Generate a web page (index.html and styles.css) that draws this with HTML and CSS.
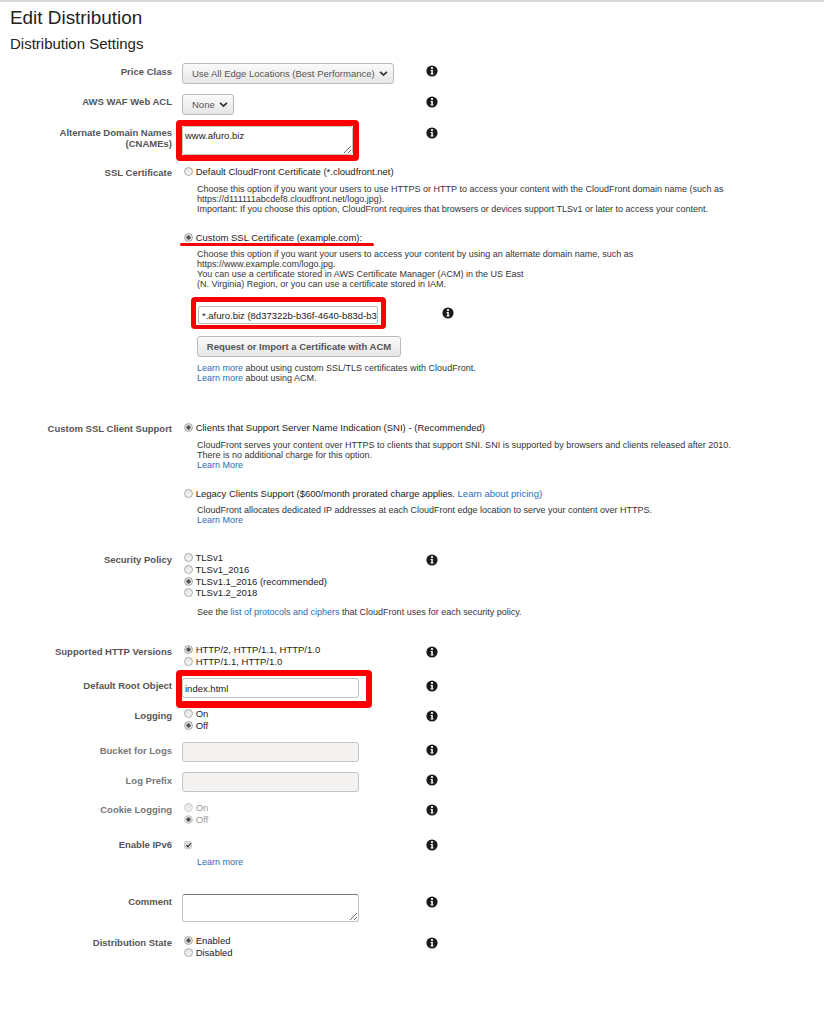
FILE: index.html
```html
<!DOCTYPE html>
<html lang="en">
<head>
    <meta charset="UTF-8">
    <meta name="viewport" content="width=device-width, initial-scale=1.0">
    <title>Edit Distribution</title>
    <link rel="stylesheet" href="styles.css">
</head>
<body>
    <svg class="icon-defs" width="0" height="0">
        <symbol id="info" viewBox="0 0 12 12">
            <circle cx="6" cy="6" r="5.6" fill="#1a1a1a"/>
            <circle cx="6" cy="3.1" r="1.15" fill="#fff"/>
            <path d="M4.6 5h2.2v3.4h.7v1H4.5v-1h.8V6h-.7z" fill="#fff"/>
        </symbol>
        <symbol id="chevron" viewBox="0 0 10 7">
            <path d="M1.2 1.6 5 5.2l3.8-3.6" fill="none" stroke="#333" stroke-width="2"/>
        </symbol>
    </svg>

    <h1>Edit Distribution</h1>
    <h2>Distribution Settings</h2>

    <form class="settings">
        <div class="row price-row">
            <label class="field-label">Price Class</label>
            <div class="control">
                <button type="button" class="dropdown">Use All Edge Locations (Best Performance) <svg class="chevron"><use href="#chevron"/></svg></button>
            </div>
            <svg class="info"><use href="#info"/></svg>
        </div>

        <div class="row waf-row">
            <label class="field-label">AWS WAF Web ACL</label>
            <div class="control">
                <button type="button" class="dropdown">None <svg class="chevron"><use href="#chevron"/></svg></button>
            </div>
            <svg class="info"><use href="#info"/></svg>
        </div>

        <div class="row cname-row">
            <label class="field-label">Alternate Domain Names<br>(CNAMEs)</label>
            <div class="control">
                <div class="highlight highlight-cname">
                    <textarea class="text-area cname-input">www.afuro.biz</textarea>
                </div>
            </div>
            <svg class="info"><use href="#info"/></svg>
        </div>

        <div class="row ssl-row">
            <label class="field-label">SSL Certificate</label>
            <div class="wide">
                <label class="option"><input type="radio" name="ssl"> Default CloudFront Certificate (*.cloudfront.net)</label>
                <p class="note first-note">Choose this option if you want your users to use HTTPS or HTTP to access your content with the CloudFront domain name (such as<br>
                https://d111111abcdef8.cloudfront.net/logo.jpg).<br>
                Important: If you choose this option, CloudFront requires that browsers or devices support TLSv1 or later to access your content.</p>

                <label class="option custom-ssl"><input type="radio" name="ssl" checked> Custom SSL Certificate (example.com):</label>
                <div class="underline"></div>
                <p class="note custom-note">Choose this option if you want your users to access your content by using an alternate domain name, such as<br>
                https://www.example.com/logo.jpg.<br>
                You can use a certificate stored in AWS Certificate Manager (ACM) in the US East<br>
                (N. Virginia) Region, or you can use a certificate stored in IAM.</p>

                <div class="cert-row">
                    <div class="highlight highlight-cert">
                        <div class="cert-select">*.afuro.biz (8d37322b-b36f-4640-b83d-b3</div>
                    </div>
                    <svg class="info"><use href="#info"/></svg>
                </div>

                <button type="button" class="dropdown acm-button">Request or Import a Certificate with ACM</button>
                <p class="note learn-note"><a href="#">Learn more</a> about using custom SSL/TLS certificates with CloudFront.<br>
                <a href="#">Learn more</a> about using ACM.</p>
            </div>
        </div>

        <div class="row client-row">
            <label class="field-label">Custom SSL Client Support</label>
            <div class="wide">
                <label class="option"><input type="radio" name="sni" checked> Clients that Support Server Name Indication (SNI) - (Recommended)</label>
                <p class="note first-note">CloudFront serves your content over HTTPS to clients that support SNI. SNI is supported by browsers and clients released after 2010.<br>
                There is no additional charge for this option.<br>
                <a href="#">Learn More</a></p>

                <label class="option legacy"><input type="radio" name="sni"> Legacy Clients Support ($600/month prorated charge applies.&nbsp;<a href="#">Learn about pricing)</a></label>
                <p class="note legacy-note">CloudFront allocates dedicated IP addresses at each CloudFront edge location to serve your content over HTTPS.<br>
                <a href="#">Learn More</a></p>
            </div>
        </div>

        <div class="row policy-row">
            <label class="field-label">Security Policy</label>
            <div class="control">
                <label class="option"><input type="radio" name="tls"> TLSv1</label>
                <label class="option"><input type="radio" name="tls"> TLSv1_2016</label>
                <label class="option"><input type="radio" name="tls" checked> TLSv1.1_2016 (recommended)</label>
                <label class="option"><input type="radio" name="tls"> TLSv1.2_2018</label>
            </div>
            <svg class="info"><use href="#info"/></svg>
            <p class="note policy-note">See the <a href="#">list of protocols and ciphers</a> that CloudFront uses for each security policy.</p>
        </div>

        <div class="row http-row">
            <label class="field-label">Supported HTTP Versions</label>
            <div class="control">
                <label class="option"><input type="radio" name="http" checked> HTTP/2, HTTP/1.1, HTTP/1.0</label>
                <label class="option"><input type="radio" name="http"> HTTP/1.1, HTTP/1.0</label>
            </div>
            <svg class="info"><use href="#info"/></svg>
        </div>

        <div class="row root-row">
            <label class="field-label">Default Root Object</label>
            <div class="control">
                <div class="highlight highlight-root">
                    <input type="text" class="text-input" value="index.html">
                </div>
            </div>
            <svg class="info"><use href="#info"/></svg>
        </div>

        <div class="row logging-row">
            <label class="field-label">Logging</label>
            <div class="control">
                <label class="option"><input type="radio" name="log"> On</label>
                <label class="option"><input type="radio" name="log" checked> Off</label>
            </div>
            <svg class="info"><use href="#info"/></svg>
        </div>

        <div class="row bucket-row">
            <label class="field-label muted">Bucket for Logs</label>
            <div class="control"><input type="text" class="text-input" disabled></div>
            <svg class="info"><use href="#info"/></svg>
        </div>

        <div class="row prefix-row">
            <label class="field-label muted">Log Prefix</label>
            <div class="control"><input type="text" class="text-input" disabled></div>
            <svg class="info"><use href="#info"/></svg>
        </div>

        <div class="row cookie-row">
            <label class="field-label muted">Cookie Logging</label>
            <div class="control">
                <label class="option disabled"><input type="radio" name="cookie" disabled> On</label>
                <label class="option disabled"><input type="radio" name="cookie" checked disabled> Off</label>
            </div>
            <svg class="info"><use href="#info"/></svg>
        </div>

        <div class="row ipv6-row">
            <label class="field-label">Enable IPv6</label>
            <div class="control">
                <label class="option"><input type="checkbox" checked></label>
                <p class="note ipv6-note"><a href="#">Learn more</a></p>
            </div>
            <svg class="info"><use href="#info"/></svg>
        </div>

        <div class="row comment-row">
            <label class="field-label">Comment</label>
            <div class="control"><textarea class="text-area comment-input"></textarea></div>
            <svg class="info"><use href="#info"/></svg>
        </div>

        <div class="row state-row">
            <label class="field-label">Distribution State</label>
            <div class="control">
                <label class="option"><input type="radio" name="state" checked> Enabled</label>
                <label class="option"><input type="radio" name="state"> Disabled</label>
            </div>
            <svg class="info"><use href="#info"/></svg>
        </div>
    </form>
</body>
</html>
```

FILE: styles.css
```css
body {
    margin: 0;
    height: 1024px;
    overflow: hidden;
    box-sizing: border-box;
    border-top: 2px solid #d8d8d8;
    background: #fff;
    color: #222;
    font-family: "Liberation Sans", Arial, sans-serif;
    font-size: 9.5px;
}

.icon-defs {
    display: block;
}

h1 {
    margin: 6px 0 0 10px;
    font-size: 18.9px;
    line-height: 20px;
    font-weight: normal;
}

h2 {
    margin: 7px 0 0 10px;
    font-size: 15px;
    line-height: 18px;
    font-weight: normal;
}

a {
    color: #2b6cb8;
    text-decoration: none;
}

.row {
    display: grid;
    grid-template-columns: 172px 234px 12px 1fr;
    column-gap: 10px;
    align-items: start;
}

.field-label {
    text-align: right;
    font-weight: bold;
    color: #555;
    line-height: 11px;
    padding-top: 2px;
}

.field-label.muted {
    color: #777;
}

.wide {
    grid-column: 2 / -1;
}

.control {
    min-width: 0;
}

.info {
    display: block;
    width: 12px;
    height: 12px;
    margin-top: 2px;
}

/* row spacing */
.price-row { margin-top: 10px; }
.price-row .field-label { padding-top: 3px; }
.waf-row { margin-top: 10px; }
.cname-row { margin-top: 5px; }
.cname-row .info { margin-top: 7px; }
.cname-row .field-label { padding-top: 6.5px; }
.ssl-row { margin-top: 4px; }
.client-row { margin-top: 38px; }
.policy-row { margin-top: 27px; }
.http-row { margin-top: 27px; }
.root-row { margin-top: 3px; }
.root-row .field-label { padding-top: 10px; }
.root-row .info { margin-top: 10px; }
.logging-row { margin-top: 0; }
.bucket-row { margin-top: 10px; }
.bucket-row .field-label { padding-top: 3px; }
.prefix-row { margin-top: 10px; }
.prefix-row .field-label { padding-top: 3px; }
.cookie-row { margin-top: 10px; }
.ipv6-row { margin-top: 14px; }
.ipv6-row .field-label { padding-top: 0; }
.ipv6-row .info { margin-top: 0; }
.comment-row { margin-top: 27px; }
.state-row { margin-top: 13px; }

.dropdown {
    display: inline-flex;
    vertical-align: top;
    align-items: center;
    gap: 4px;
    height: 21px;
    padding: 0 5px 0 9px;
    border: 1px solid #bbb;
    border-radius: 3px;
    background: linear-gradient(#fafafa, #e6e6e6);
    color: #555;
    font-family: inherit;
    font-size: 9.5px;
    white-space: nowrap;
}

.chevron {
    width: 9px;
    height: 7px;
}

.highlight {
    width: fit-content;
    border: 6px solid #fa0000;
    border-radius: 4px;
    background: #fff;
    margin-left: -6px;
}

.highlight-root {
    border-width: 6px 6px 7px;
    padding: 2px 7px 3px 0;
}

.text-area,
.text-input {
    display: block;
    box-sizing: border-box;
    border: 1px solid #c4c4c4;
    border-radius: 3px;
    background: #fff;
    color: #222;
    font-family: inherit;
    font-size: 9.5px;
    padding: 3px 2px;
    margin: 0;
    outline: none;
}

.text-input {
    width: 177px;
    height: 20px;
}

.text-input:disabled {
    background: #f3f2f0;
}

.cname-input {
    width: 171px;
    height: 29px;
}

.comment-input {
    width: 177px;
    height: 28px;
    border-top-color: #777;
}

.option {
    display: flex;
    align-items: center;
    height: 11.7px;
    white-space: pre;
    color: #222;
}

.wide .option {
    height: 12px;
}

.option.disabled {
    color: #999;
}

.option input {
    appearance: none;
    box-sizing: border-box;
    width: 9px;
    height: 9px;
    margin: 0 0 0 2px;
    border: 1px solid #aaa;
    border-radius: 50%;
    background: linear-gradient(#e4e4e4, #f4f4f4);
}

.option input:checked {
    background: radial-gradient(circle, #555 0 1.8px, #ddd 2.4px);
}

.option input:disabled {
    border-color: #ccc;
}

.option input[type="checkbox"] {
    width: 8px;
    height: 8px;
    border-radius: 2px;
    border-color: #ccc;
    background: #ddd;
    position: relative;
}

.option input[type="checkbox"]::after {
    content: "";
    position: absolute;
    left: 1.5px;
    top: 0;
    width: 2px;
    height: 4px;
    border: solid #222;
    border-width: 0 1.3px 1.3px 0;
    transform: rotate(40deg);
}

.note {
    margin: 4px 0 0 15px;
    font-size: 9px;
    line-height: 10px;
    color: #333;
}

.first-note {
    margin-top: 7px;
}

.custom-ssl {
    margin-top: 17px;
}

.underline {
    width: 194px;
    height: 3px;
    margin: 0 0 0 -2px;
    background: #fa0000;
    border-radius: 2px;
}

.custom-note {
    margin-top: 3px;
}

.cert-row {
    display: flex;
    align-items: center;
    gap: 56px;
    margin: 8px 0 0 9px;
}

.cert-row .info {
    margin-top: 0;
}

.highlight-cert {
    border-width: 5px 5px 4px;
    padding: 4px 3px 1px 2px;
    margin-left: 0;
}

.cert-select {
    box-sizing: border-box;
    width: 180px;
    height: 18px;
    line-height: 17px;
    padding-left: 3px;
    border: 1px solid #bbb;
    border-radius: 2px;
    font-size: 9.5px;
    white-space: nowrap;
}

.acm-button {
    display: flex;
    margin: 7px 0 0 15px;
    width: 204px;
    justify-content: center;
    padding: 0;
    font-weight: bold;
}

.learn-note {
    margin-top: 6px;
}

.legacy {
    margin-top: 17px;
}

.legacy-note {
    margin-top: 6px;
}

.policy-note {
    grid-column: 2 / -1;
    margin-top: 8px;
}

.ipv6-note {
    margin-top: 6px;
}
```
